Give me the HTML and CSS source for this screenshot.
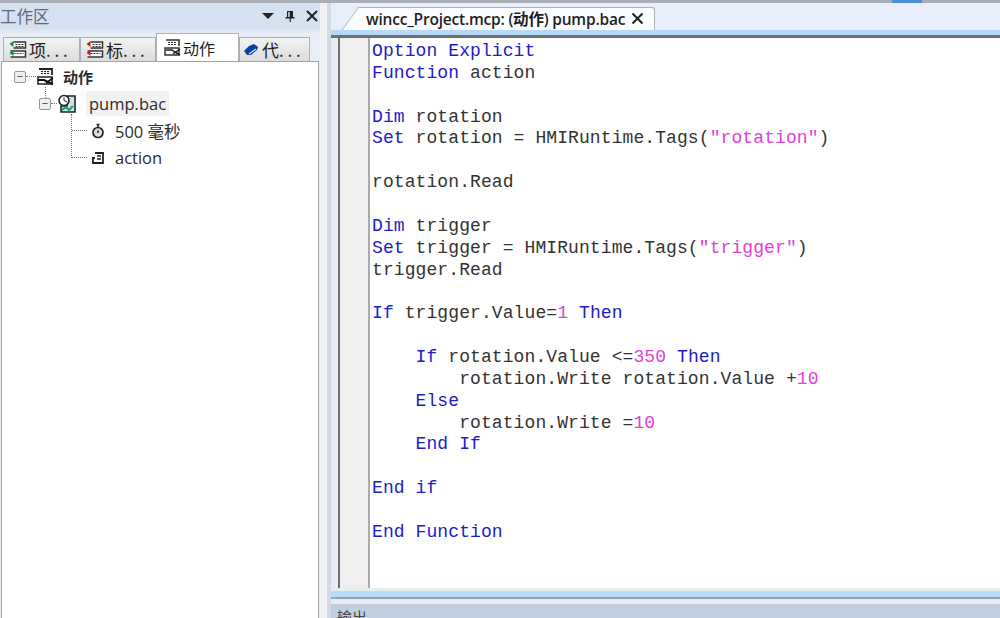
FILE: index.html
```html
<!DOCTYPE html>
<html lang="zh">
<head>
<meta charset="utf-8">
<title>wincc_Project.mcp</title>
<link rel="stylesheet" href="styles.css">
</head>
<body>
<div class="app">
  <div class="topline"></div>
  <div class="main">
    <aside class="workspace">
      <header class="ws-title">
        <span class="ws-name">工作区</span>
        <span class="ws-controls">
          <svg width="12" height="8" viewBox="0 0 12 8"><path d="M0 1h12L6 7z" fill="#222"/></svg>
          <svg width="10" height="12" viewBox="0 0 10 12"><path d="M2 1h6v6h1.500v1.500H5.800V12H4.700V8.500H.5V7H2zM3.200 2v5h1.500V2z" fill="#222"/></svg>
          <svg width="12" height="12" viewBox="0 0 12 12"><path d="M1 1l10 10M11 1L1 11" stroke="#222" stroke-width="2" fill="none"/></svg>
        </span>
      </header>
      <nav class="tabs">
        <div class="tab tab-a">
          <svg class="tab-icon" width="20" height="18" viewBox="0 0 19 18"><path d="M5 1h12v6H5M2 10h15v6H2" fill="#fff" stroke="#333" stroke-width="1.500"/><path d="M7 3.500h8M7 5.500h8M5 12.500h10" stroke="#333" stroke-dasharray="2 1"/><path d="M5 0L1 3l4 3zM5 9l-4 3 4 3z" fill="#0a8a55"/></svg>
          <span>项. . .</span>
        </div>
        <div class="tab tab-b">
          <svg class="tab-icon" width="20" height="18" viewBox="0 0 19 18"><path d="M5 1h12v6H5M2 10h15v6H2" fill="#fff" stroke="#333" stroke-width="1.500"/><path d="M7 3.500h8M7 5.500h8M5 12.500h10" stroke="#333" stroke-dasharray="2 1"/><path d="M5 0L1 3l4 3zM5 9l-4 3 4 3z" fill="#d01818"/></svg>
          <span>标. . .</span>
        </div>
        <div class="tab tab-active">
          <svg class="tab-icon" width="20" height="18" viewBox="0 0 20 18"><path d="M3 1h13v6" fill="none" stroke="#333" stroke-width="1.600"/><path d="M5 3.500h9M5 5.500h9" stroke="#333" stroke-dasharray="2 1"/><path d="M2 9h14v7H2z" fill="#fff" stroke="#333" stroke-width="1.500"/><path d="M3 11h6l3 2 5 3" stroke="#222" stroke-width="1.500" fill="none"/><path d="M10 15l7-5" stroke="#222" stroke-width="1.500"/></svg>
          <span>动作</span>
        </div>
        <div class="tab tab-d">
          <svg class="tab-icon" width="16" height="14" viewBox="0 0 16 14"><path d="M1 8l5-5 5-2 4 3-1 3-6 5-4 0z" fill="#0b3f9c"/><path d="M6 11l7-5" stroke="#cfe0ff" stroke-width="1.300"/></svg>
          <span>代. . .</span>
        </div>
      </nav>
      <div class="tree">
        <div class="node node-root">
          <span class="box">−</span><span class="dots-h"></span>
          <svg class="node-icon" width="20" height="18" viewBox="0 0 20 18"><path d="M3 1h13v6" fill="none" stroke="#222" stroke-width="1.800"/><path d="M5 3.500h9M5 5.500h9" stroke="#222" stroke-dasharray="2 1"/><path d="M2 9h14v7H2z" fill="#fff" stroke="#222" stroke-width="1.600"/><path d="M2 12h6l4 2 5 2" stroke="#111" stroke-width="2" fill="none"/><path d="M10 15l7-5" stroke="#111" stroke-width="1.600"/></svg>
          <strong class="root-label">动作</strong>
        </div>
        <div class="node node-pump">
          <span class="box">−</span><span class="dots-h short"></span>
          <svg class="node-icon" width="20" height="20" viewBox="0 0 20 20"><path d="M10 2h8v16H4v-6h6z" fill="#cfe6dc" stroke="#223" stroke-width="1.600"/><circle cx="7" cy="6.500" r="5" fill="#fff" stroke="#222" stroke-width="1.600"/><path d="M7 3.500v3l3 1.500" stroke="#222" fill="none"/><path d="M5 16l4-3 3 3 4-4" stroke="#1a9a80" stroke-width="2" fill="none"/></svg>
          <span class="pump-label">pump.bac</span>
        </div>
        <div class="node node-child">
          <span class="dots-h long"></span>
          <svg class="leaf-icon" width="14" height="16" viewBox="0 0 14 16"><circle cx="7" cy="9.500" r="5" fill="#ddd" stroke="#222" stroke-width="1.700"/><path d="M5.500 1.500h3M7 2v3M7 7.500v2.500" stroke="#222" stroke-width="1.500"/></svg>
          <span>500 毫秒</span>
        </div>
        <div class="node node-child">
          <span class="dots-h long"></span>
          <svg class="leaf-icon" width="14" height="14" viewBox="0 0 14 14"><path d="M4 2h8v10H2V7h2" fill="none" stroke="#222" stroke-width="1.800"/><path d="M6 5h4M6 8h4" stroke="#222" stroke-width="1.500"/></svg>
          <span>action</span>
        </div>
        <span class="vline vline-a"></span>
        <span class="vline vline-b"></span>
      </div>
    </aside>
    <section class="editor-wrap">
      <div class="doc-tabs">
        <div class="doc-tab">
          <span class="doc-name">wincc_Project.mcp: (动作) pump.bac</span>
          <svg width="13" height="13" viewBox="0 0 13 13"><path d="M1.500 1.500l10 10M11.500 1.500l-10 10" stroke="#222" stroke-width="2" fill="none"/></svg>
        </div>
      </div>
      <div class="doc-rule"></div>
      <div class="editor">
        <div class="gutter"></div>
<pre class="code"><span class="k">Option Explicit</span>
<span class="k">Function</span> action

<span class="k">Dim</span> rotation
<span class="k">Set</span> rotation = HMIRuntime.Tags(<span class="s">"rotation"</span>)

rotation.Read

<span class="k">Dim</span> trigger
<span class="k">Set</span> trigger = HMIRuntime.Tags(<span class="s">"trigger"</span>)
trigger.Read

<span class="k">If</span> trigger.Value=<span class="s">1</span> <span class="k">Then</span>

    <span class="k">If</span> rotation.Value &lt;=<span class="s">350</span> <span class="k">Then</span>
        rotation.Write rotation.Value +<span class="s">10</span>
    <span class="k">Else</span>
        rotation.Write =<span class="s">10</span>
    <span class="k">End If</span>

<span class="k">End if</span>

<span class="k">End Function</span></pre>
      </div>
      <div class="editor-foot"></div>
      <div class="output-bar"><span>输出</span></div>
    </section>
  </div>
</div>
</body>
</html>
```
FILE: styles.css
```css
* { box-sizing: border-box; }
html, body { margin: 0; padding: 0; }
body {
  width: 1000px;
  height: 618px;
  overflow: hidden;
  font-family: "Open Sans", "Noto Sans CJK SC", sans-serif;
  color: #222;
  background: #dfe6f1;
}
.app { width: 1000px; height: 618px; display: flex; flex-direction: column; }
.topline {
  height: 3px;
  flex: none;
  background: linear-gradient(90deg, #a9adb6 0 892px, #4f8fd8 892px 922px, #a9adb6 922px);
}
.main { flex: 1; display: flex; min-height: 0; }

.workspace {
  width: 327px;
  flex: none;
  display: flex;
  flex-direction: column;
  background: #e9eef6;
  border-right: 7px solid #f0f2f6;
}
.ws-title {
  height: 25px;
  flex: none;
  display: flex;
  align-items: center;
  justify-content: space-between;
  padding: 0 2px 0 0;
  background: #d5e1f0;
}
.ws-name { font: 16.500px "Noto Sans CJK SC", sans-serif; color: #5d6b7c; }
.ws-controls { display: flex; align-items: center; gap: 11px; }

.tabs {
  height: 33px;
  flex: none;
  display: flex;
  align-items: flex-end;
  padding-left: 3px;
  background: linear-gradient(#d5e1f0, #e9eef6 6px);
}
.tab {
  height: 24px;
  display: flex;
  align-items: center;
  font: 17px "Noto Sans CJK SC", sans-serif;
  color: #222;
  background: linear-gradient(#f3f3f3, #dcdcdc);
  border: 1px solid #aab0b8;
  border-bottom: 0;
  white-space: nowrap;
  overflow: hidden;
}
.tab-a { width: 77px; padding-left: 4px; }
.tab-b { width: 76px; padding-left: 4px; }
.tab-active { width: 83px; height: 28px; padding-left: 6px; background: #fff; font-size: 16px; }
.tab-d { width: 71px; padding-left: 3px; }
.tab-a .tab-icon, .tab-b .tab-icon { margin-right: 1px; }
.tab-icon { flex: none; }
.tab-d .tab-icon { margin-right: 3px; }

.tree {
  flex: 1;
  position: relative;
  margin: 0 1px;
  background: #fff;
  border: 1px solid #9ea3aa;
  border-bottom: 0;
  padding-top: 1px;
}
.node {
  height: 27px;
  display: flex;
  align-items: center;
  white-space: nowrap;
  font: 16.500px "Open Sans", "Noto Sans CJK SC", sans-serif;
  color: #2b2b2b;
}
.node-root { padding-left: 12px; }
.node-pump { padding-left: 37px; }
.node-child { padding-left: 70px; }
.box {
  width: 12px;
  height: 12px;
  flex: none;
  display: flex;
  align-items: center;
  justify-content: center;
  font: 11px/1 "Liberation Sans", sans-serif;
  color: #444;
  background: #f0f0f0;
  border: 1px solid #999;
  border-radius: 2px;
}
.dots-h { width: 10px; flex: none; border-top: 1px dotted #777; }
.dots-h.short { width: 6px; }
.dots-h.long { width: 15px; }
.node-icon { flex: none; }
.root-label { margin-left: 7px; font: 700 15px "Noto Sans CJK SC", sans-serif; }
.pump-label { margin-left: 9px; padding: 1px 3px 1px 3px; background: #f2f2f2; }
.node-child .leaf-icon { margin: 0 10px 0 4px; flex: none; }
.vline { position: absolute; width: 0; border-left: 1px dotted #777; }
.vline-a { left: 43px; top: 25px; height: 11px; }
.vline-b { left: 69px; top: 52px; height: 44px; }

.editor-wrap {
  flex: 1;
  min-width: 0;
  display: flex;
  flex-direction: column;
  background: #e9ecf6;
  border-left: 4px solid #d2dae6;
}
.doc-tabs {
  height: 27px;
  flex: none;
  background: #e8eefb;
  padding-left: 28px;
  display: flex;
  align-items: flex-end;
}
.doc-tab {
  position: relative;
  width: 296px;
  height: 23px;
  display: flex;
  align-items: center;
  gap: 6px;
  padding: 0 0 2px 7px;
  background: #fbfcfe;
  border: 1px solid #aab2be;
  border-left: 0;
  border-bottom: 0;
  border-radius: 0 3px 0 0;
}
.doc-tab::before {
  content: "";
  position: absolute;
  left: -9px;
  top: -1px;
  bottom: 0;
  width: 18px;
  background: #fbfcfe;
  border-left: 1px solid #aab2be;
  border-top: 1px solid #aab2be;
  transform: skewX(-36deg);
}
.doc-name {
  position: relative;
  font: 600 15.500px "Open Sans", "Noto Sans CJK SC", sans-serif;
  color: #1f1f1f;
  letter-spacing: -.2px;
  white-space: nowrap;
}
.doc-rule { height: 8px; flex: none; background: linear-gradient(#b5d9f7 0 5px, #6f7174 5px); }

.editor {
  flex: none;
  height: 550px;
  margin-left: 7px;
  display: flex;
  border-left: 2px solid #6d7073;
  background: #fff;
}
.gutter { width: 30px; flex: none; background: #efefef; border-right: 2px solid #a9abad; }
.code {
  margin: 0;
  padding: 3px 0 0 2px;
  font: 18px/21.860px "Liberation Mono", monospace;
  letter-spacing: .09px;
  color: #333;
}
.k { color: #1c1cc8; }
.s { color: #e040d8; }

.editor-foot {
  height: 11px;
  flex: none;
  background: linear-gradient(#e6eef2 0 3px, #b7dcf9 3px 9px, #97a3ae 9px);
}
.output-bar {
  flex: 1;
  min-height: 0;
  overflow: hidden;
  background: linear-gradient(#e9ecf6 0 5px, #bfcfe0 5px);
  padding: 9px 0 0 6px;
  font: 15px/18px "Noto Sans CJK SC", sans-serif;
  color: #444;
}
```
